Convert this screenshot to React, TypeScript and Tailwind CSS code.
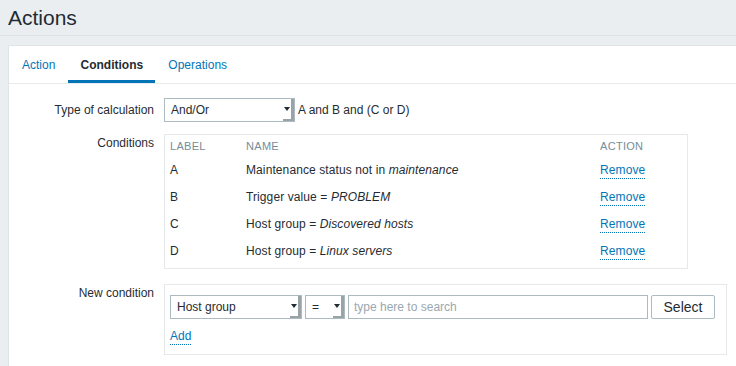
import React from 'react';

const font = { fontFamily: '"Liberation Sans", Arial, sans-serif' };

const conditions = [
  { label: 'A', text: 'Maintenance status not in ', value: 'maintenance' },
  { label: 'B', text: 'Trigger value = ', value: 'PROBLEM' },
  { label: 'C', text: 'Host group = ', value: 'Discovered hosts' },
  { label: 'D', text: 'Host group = ', value: 'Linux servers' },
];

function FakeSelect({ value, width }: { value: string; width: string }) {
  return (
    <div className={`relative h-[24px] ${width} border border-[#acbbc2] bg-white flex items-center pl-[6px] text-[12px] text-[#1f2c33]`}>
      <span>{value}</span>
      {/* native-style drop arrow with bevel */}
      <div className="absolute right-0 top-0 bottom-0 w-[11px] flex items-center justify-center border-r-[3px] border-b-[2px] border-[#9aa4a8]">
        <svg width="6" height="4" viewBox="0 0 6 4">
          <path d="M0 0 H6 L3 4 Z" fill="#1f2c33" />
        </svg>
      </div>
    </div>
  );
}

function Row({ label, children, top = 'items-center' }: { label: string; children: React.ReactNode; top?: string }) {
  return (
    <div className={`flex ${top}`}>
      <div className="w-[145px] text-right text-[12px] text-[#1f2c33] shrink-0">{label}</div>
      <div className="ml-[10px] flex-1">{children}</div>
    </div>
  );
}

export default function App() {
  return (
    <div className="w-[736px] h-[366px] bg-[#ebeef0] overflow-hidden" style={font}>
      <div className="h-[36px] border-b border-[#dde2e5] pl-[8px] flex items-center">
        <h1 className="text-[21px] text-[#1f2c33] leading-none -mt-[1px]">Actions</h1>
      </div>
      <div className="ml-[8px] mt-[9px] bg-white border-t border-l border-[#dfe4e7] h-[330px]">
        {/* tabs */}
        <div className="flex h-[38px] border-b border-[#e7ebed] text-[12px]">
          <div className="pl-[13px] pr-[13px] flex items-center text-[#0275b8]">Action</div>
          <div className="w-[87px] flex items-center justify-center font-bold text-[#1f2c33] border-b-[3px] border-[#0275b8] pt-[3px]">Conditions</div>
          <div className="pl-[13px] flex items-center text-[#0275b8]">Operations</div>
        </div>

        <div className="pt-[14px] flex flex-col">
          <Row label="Type of calculation">
            <div className="flex items-center gap-[3px]">
              <FakeSelect value="And/Or" width="w-[131px]" />
              <span className="text-[12px] text-[#1f2c33]">A and B and (C or D)</span>
            </div>
          </Row>

          <div className="mt-[12px]">
            <Row label="Conditions" top="items-start">
              <div className="w-[524px] h-[135px] border border-[#e6e9eb] px-[5px] pt-[3px] text-[12px] text-[#1f2c33] tracking-[0.1px]">
                <div className="flex h-[17px] items-center text-[11px] text-[#768d99] tracking-[0.3px]">
                  <div className="w-[76px]">LABEL</div>
                  <div className="flex-1">NAME</div>
                  <div className="w-[82px]">ACTION</div>
                </div>
                {conditions.map((c) => (
                  <div key={c.label} className="flex h-[27px] items-center pt-[2px]">
                    <div className="w-[76px]">{c.label}</div>
                    <div className="flex-1">
                      {c.text}
                      <i>{c.value}</i>
                    </div>
                    <div className="w-[82px]">
                      <span className="text-[#0275b8] border-b border-dotted border-[#0275b8] pb-[1px]">Remove</span>
                    </div>
                  </div>
                ))}
              </div>
            </Row>
          </div>

          <div className="mt-[15px]">
            <Row label="New condition" top="items-start">
              <div className="w-[563px] h-[71px] border border-[#e6e9eb] pl-[5px] pt-[10px] text-[12px]">
                <div className="flex items-center gap-[3px]">
                  <FakeSelect value="Host group" width="w-[132px]" />
                  <FakeSelect value="=" width="w-[40px]" />
                  <div className="h-[24px] w-[300px] border border-[#acbbc2] flex items-center pl-[5px] text-[#9aa7af]">
                    type here to search
                  </div>
                  <div className="h-[24px] w-[64px] border border-[#acbbc2] rounded-[2px] flex items-center justify-center text-[14px] text-[#1f2c33]">
                    Select
                  </div>
                </div>
                <div className="mt-[8px]">
                  <span className="text-[#0275b8] border-b border-dotted border-[#0275b8] pb-[1px]">Add</span>
                </div>
              </div>
            </Row>
          </div>
        </div>
      </div>
    </div>
  );
}
